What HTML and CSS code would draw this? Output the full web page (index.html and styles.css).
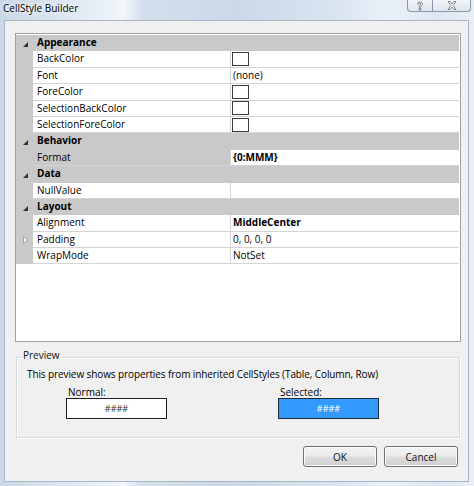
FILE: index.html
```html
<!DOCTYPE html>
<html>
<head>
<meta charset="utf-8">
<link rel="stylesheet" href="styles.css">
</head>
<body>
<div class="window">
  <div class="titlebar">
    <span class="title">CellStyle Builder</span>
    <div class="caption-btns">
      <div class="cbtn help">
        <svg width="8" height="10" viewBox="0 0 8 10"><path d="M1.5 3 C1.5 0.5 6.5 0.5 6.5 3 C6.5 4.5 4.8 4.6 4.8 6.2 L3.2 6.2 C3.2 4.3 4.9 4 4.9 3 C4.9 2 3.1 2 3.1 3 Z M3.2 7.3 L4.8 7.3 L4.8 9 L3.2 9 Z" fill="#fff" stroke="#6b6b6b" stroke-width="0.8"/></svg>
      </div>
      <div class="cbtn close">
        <svg width="10" height="9" viewBox="0 0 10 9"><path d="M1 0.5 L3 0.5 L5 3 L7 0.5 L9 0.5 L6.2 4.5 L9 8.5 L7 8.5 L5 6 L3 8.5 L1 8.5 L3.8 4.5 Z" fill="#fff" stroke="#6b6b6b" stroke-width="0.8"/></svg>
      </div>
    </div>
  </div>
  <div class="client">
    <div class="grid">
      <div class="row cat"><span class="gut"><svg class="exp" width="5" height="5" viewBox="0 0 5 5"><polygon points="5,0 5,5 0,5" fill="#333"/></svg></span><span class="catname">Appearance</span></div>
      <div class="row"><span class="gut"></span><span class="name">BackColor</span><span class="val"><i class="swatch"></i></span></div>
      <div class="row"><span class="gut"></span><span class="name">Font</span><span class="val">(none)</span></div>
      <div class="row"><span class="gut"></span><span class="name">ForeColor</span><span class="val"><i class="swatch"></i></span></div>
      <div class="row"><span class="gut"></span><span class="name">SelectionBackColor</span><span class="val"><i class="swatch"></i></span></div>
      <div class="row"><span class="gut"></span><span class="name">SelectionForeColor</span><span class="val"><i class="swatch"></i></span></div>
      <div class="row cat"><span class="gut"><svg class="exp" width="5" height="5" viewBox="0 0 5 5"><polygon points="5,0 5,5 0,5" fill="#333"/></svg></span><span class="catname">Behavior</span></div>
      <div class="row sel"><span class="gut"></span><span class="name">Format</span><span class="val bold">{0:MMM}</span></div>
      <div class="row cat"><span class="gut"><svg class="exp" width="5" height="5" viewBox="0 0 5 5"><polygon points="5,0 5,5 0,5" fill="#333"/></svg></span><span class="catname">Data</span></div>
      <div class="row"><span class="gut"></span><span class="name">NullValue</span><span class="val"></span></div>
      <div class="row cat"><span class="gut"><svg class="exp" width="5" height="5" viewBox="0 0 5 5"><polygon points="5,0 5,5 0,5" fill="#333"/></svg></span><span class="catname">Layout</span></div>
      <div class="row"><span class="gut"></span><span class="name">Alignment</span><span class="val bold">MiddleCenter</span></div>
      <div class="row"><span class="gut"><svg class="col" width="5" height="8" viewBox="0 0 5 8"><polygon points="0.5,0.5 4.5,4 0.5,7.5" fill="#fff" stroke="#a8a8a8" stroke-width="1"/></svg></span><span class="name">Padding</span><span class="val">0, 0, 0, 0</span></div>
      <div class="row"><span class="gut"></span><span class="name">WrapMode</span><span class="val">NotSet</span></div>
    </div>
    <fieldset class="preview">
      <legend>Preview</legend>
      <p class="desc">This preview shows properties from inherited CellStyles (Table, Column, Row)</p>
      <div class="samples">
        <div class="sample">
          <div class="slabel">Normal:</div>
          <div class="sbox normal">####</div>
        </div>
        <div class="sample">
          <div class="slabel">Selected:</div>
          <div class="sbox selected">####</div>
        </div>
      </div>
    </fieldset>
    <div class="buttons">
      <button class="btn">OK</button>
      <button class="btn">Cancel</button>
    </div>
  </div>
</div>
</body>
</html>
```

FILE: styles.css
```css
html, body {
  margin: 0;
  padding: 0;
}
body {
  width: 474px;
  height: 486px;
  overflow: hidden;
  font-family: "Open Sans", "Noto Sans", sans-serif;
  font-size: 10px;
  color: #111;
}
.window {
  width: 474px;
  height: 486px;
  display: flex;
  flex-direction: column;
  background: linear-gradient(90deg, #c9d7e7 0%, #dbe5f0 12%, #eef3f9 24%, #f4f7fb 26%, #d3dfec 30%, #cbd8e8 50%, #d9e4f0 70%, #eaf0f7 82%, #dfe8f2 92%, #e9eef4 100%);
  box-sizing: border-box;
}
.titlebar {
  height: 20px;
  display: flex;
  justify-content: space-between;
  align-items: flex-start;
  flex: none;
}
.title {
  padding-left: 3px;
  line-height: 17px;
  font-size: 10px;
  color: #000;
  text-shadow: 0 0 4px #fff, 0 0 6px #fff;
}
.caption-btns {
  display: flex;
  margin-right: 3px;
}
.cbtn {
  height: 12px;
  box-sizing: border-box;
  border: 1px solid #8a97a8;
  border-top: none;
  background: linear-gradient(#f3f6fa, #dde5ee);
  display: flex;
  align-items: center;
  justify-content: center;
}
.cbtn svg { display: block; }
.help {
  width: 25px;
  border-right: none;
  border-bottom-left-radius: 4px;
}
.close {
  width: 39px;
  border-bottom-right-radius: 4px;
}
.client {
  flex: 1;
  margin: 0 5px 4px 4px;
  background: #f0f0f0;
  border: 1px solid #a9b6c6;
  display: flex;
  flex-direction: column;
}
.grid {
  margin: 12px 7px 0 10px;
  height: 309px;
  border: 1px solid #a0a0a0;
  background: #fff;
  box-sizing: border-box;
  padding: 1px 1px 0 0;
  flex: none;
}
.row {
  display: grid;
  grid-template-columns: 17px 197px 1fr;
  height: 16.4px;
  line-height: 15px;
}
.gut {
  background: #c9c9c9;
  display: flex;
  align-items: center;
  padding-left: 7px;
}
.gut .exp { margin-top: 2px; }
.gut .col { margin-left: 0px; }
.name {
  padding-left: 4px;
  border-bottom: 1px solid #d4d4d4;
  white-space: nowrap;
  color: #000;
}
.val {
  border-left: 1px solid #d4d4d4;
  border-bottom: 1px solid #d4d4d4;
  padding-left: 2px;
  display: flex;
  align-items: center;
  white-space: nowrap;
  color: #000;
}
.bold { font-weight: bold; }
.sel .name { background: #c9c9c9; }
.cat { background: #c9c9c9; }
.catname {
  grid-column: 2 / 4;
  padding-left: 4px;
  font-weight: bold;
  color: #000;
}
.swatch {
  display: block;
  width: 17px;
  height: 14px;
  box-sizing: border-box;
  border: 1px solid #3c3c3c;
  background: #fff;
  margin-left: -1px;
}
.preview {
  margin: 8px 8px 0 11px;
  padding: 0 0 18px 0;
  border: 1px solid #d5dbe0;
  box-shadow: 1px 1px 0 #fff, inset 1px 1px 0 #fff;
  flex: none;
  min-width: 0;
}
.preview legend {
  margin-left: 4px;
  padding: 0 2px 4px 2px;
  line-height: 10px;
  color: #111;
}
.desc {
  margin: 3px 0 0 10px;
  line-height: 14px;
  letter-spacing: -0.1px;
  color: #000;
}
.samples {
  display: flex;
  margin: 5px 0 0 49px;
  gap: 111px;
}
.slabel {
  line-height: 12px;
  padding-left: 2px;
  color: #000;
}
.sbox {
  width: 101px;
  height: 21px;
  box-sizing: border-box;
  border: 1px solid #1e1e1e;
  text-align: center;
  line-height: 19px;
  font-size: 9px;
}
.normal {
  background: #fff;
  color: #333;
}
.selected {
  background: #3399ff;
  border-color: #1d2a38;
  color: #fff;
}
.buttons {
  display: flex;
  justify-content: flex-end;
  gap: 7px;
  margin: 8px 10px 0 0;
}
.btn {
  width: 74px;
  height: 21px;
  padding: 0;
  font-family: "Open Sans", "Noto Sans", sans-serif;
  font-size: 10px;
  color: #111;
  border: 1px solid #707070;
  border-radius: 3px;
  background: linear-gradient(#f2f2f2 0%, #ebebeb 48%, #dddddd 52%, #cfcfcf 100%);
  box-shadow: inset 0 0 0 1px #fbfbfb;
}
```
